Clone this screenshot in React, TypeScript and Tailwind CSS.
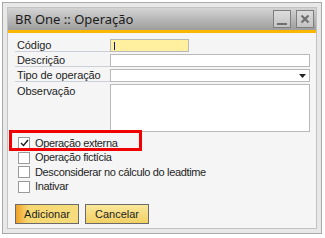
import React from 'react';

const font = "font-['Liberation_Sans',Arial,sans-serif]";

const Field: React.FC<{ label: string; line?: boolean; children: React.ReactNode; tall?: boolean }> = ({ label, line = true, children, tall }) => (
  <div className={`flex ${tall ? 'h-[48px]' : 'h-[15px]'}`}>
    <div className={`w-[95px] shrink-0 ${tall ? 'pt-[1px]' : 'h-[13px]'} ${line ? 'border-b border-[#c9d0d8]' : ''} pl-[2px] text-[11px] leading-[13px] tracking-[-0.1px] text-[#1e1e1e]`}>
      {label}
    </div>
    <div className="flex-1">{children}</div>
  </div>
);

const Check: React.FC<{ label: string; checked?: boolean }> = ({ label, checked }) => (
  <div className="flex h-[14.5px] items-center">
    <div className="w-[12px] h-[12px] border border-[#9a9a9a] bg-white flex items-center justify-center">
      {checked && (
        <svg width="9" height="8" viewBox="0 0 9 8">
          <path d="M1 4 L3.5 6.5 L8 1" fill="none" stroke="#1b1b1b" strokeWidth="1.4" />
        </svg>
      )}
    </div>
    <span className="ml-[5px] text-[11px] leading-[13px] tracking-[-0.35px] text-[#1e1e1e]">{label}</span>
  </div>
);

const WinButton: React.FC<{ children: React.ReactNode }> = ({ children }) => (
  <div className="w-[18px] h-[18px] border border-[#7e7e7e] bg-gradient-to-b from-[#dcdcdc] to-[#c3c3c3] flex items-center justify-center">
    {children}
  </div>
);

const App: React.FC = () => {
  return (
    <div className={`w-[325px] h-[238px] bg-white p-[2px] ${font}`}>
      <div className="h-[232px] w-[320px] border border-[#a9a9a9] bg-[#e8e8e8] p-[4px]">
        <div className="h-full border border-[#c2c2c2] flex flex-col">
          <div className="h-[22px] shrink-0 bg-gradient-to-b from-[#d4d4d4] to-[#9d9d9d] flex items-center justify-between pl-[7px] pr-[2px]">
            <span className="font-['Noto_Sans',sans-serif] text-[13px] leading-[16px] text-[#1a1a1a]">BR One :: Operação</span>
            <div className="flex gap-[5px]">
              <WinButton>
                <div className="w-[10px] h-[2px] bg-[#6f6f6f] mt-[9px]" />
              </WinButton>
              <WinButton>
                <svg width="10" height="10" viewBox="0 0 10 10">
                  <path d="M1.5 1.5 L8.5 8.5 M8.5 1.5 L1.5 8.5" stroke="#6f6f6f" strokeWidth="2.2" />
                </svg>
              </WinButton>
            </div>
          </div>
          <div className="h-[3px] shrink-0 bg-[#f9b700]" />
          <div className="relative flex-1 bg-[#f5f5f5] pt-[6px] pl-[7px] pr-[6px]">
            <Field label="Código">
              <div className="relative w-[79px] h-[13px] border border-[#b9b9b9] bg-[#fff0a0]">
                <div className="absolute left-[3px] top-[2px] w-[1px] h-[8px] bg-[#0b1a6e]" />
              </div>
            </Field>
            <Field label="Descrição">
              <div className="h-[13px] border border-[#b9b9b9] bg-white" />
            </Field>
            <Field label="Tipo de operação">
              <div className="h-[13px] border border-[#b9b9b9] bg-white flex items-center justify-end pr-[3px]">
                <svg width="7" height="4" viewBox="0 0 7 4">
                  <path d="M0 0 H7 L3.5 4 Z" fill="#222" />
                </svg>
              </div>
            </Field>
            <Field label="Observação" line={false} tall>
              <div className="h-[48px] border border-[#b9b9b9] bg-white" />
            </Field>

            <div className="mt-[4px] pl-[3px]">
              <Check label="Operação externa" checked />
              <Check label="Operação fictícia" />
              <Check label="Desconsiderar no cálculo do leadtime" />
              <Check label="Inativar" />
            </div>

            <div className="mt-[10px] flex gap-[6px]">
              <button className="w-[64px] h-[20px] border border-[#6b6b6b] bg-gradient-to-r from-[#f0a020] via-[#f6d872] via-[20%] to-[#f6dc7c] text-[11px] text-[#1e1e1e]">
                Adicionar
              </button>
              <button className="w-[64px] h-[20px] border border-[#6b6b6b] bg-gradient-to-b from-[#f9e79a] to-[#f2d163] text-[11px] text-[#1e1e1e]">
                Cancelar
              </button>
            </div>

            <div className="absolute left-[1px] top-[97px] w-[133px] h-[21px] border-[3px] border-[#f00000]" />
          </div>
        </div>
      </div>
    </div>
  );
};

export default App;
